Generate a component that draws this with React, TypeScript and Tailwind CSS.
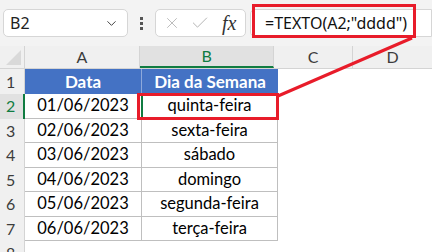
import React from 'react';
import { ChevronDown, X, Check } from 'lucide-react';

const rows: [string, string][] = [
  ['01/06/2023', 'quinta-feira'],
  ['02/06/2023', 'sexta-feira'],
  ['03/06/2023', 'sábado'],
  ['04/06/2023', 'domingo'],
  ['05/06/2023', 'segunda-feira'],
  ['06/06/2023', 'terça-feira'],
];

const cellFont = { fontFamily: 'Lato, "Liberation Sans", sans-serif' };

const App: React.FC = () => {
  return (
    <div className="relative w-[432px] h-[252px] overflow-hidden bg-white text-black" style={cellFont}>
      {/* name box + formula bar */}
      <div className="h-[46px] bg-[#f3f3f3] flex items-start pt-[9px] pl-[3px]">
        <div className="w-[125px] h-[28px] bg-white border border-[#d6d6d6] rounded-[5px] flex items-center justify-between pl-[6px] pr-[8px]">
          <span className="text-[16px] text-[#222]" style={{ fontFamily: '"Noto Sans", sans-serif' }}>B2</span>
          <ChevronDown size={15} strokeWidth={1.6} className="text-[#444]" />
        </div>
        <div className="w-[27px] h-[28px] flex flex-col items-center justify-center gap-[2px]">
          <span className="w-[3px] h-[3px] bg-[#555]" />
          <span className="w-[3px] h-[3px] bg-[#555]" />
          <span className="w-[3px] h-[3px] bg-[#555]" />
        </div>
        <div className="w-[91px] h-[28px] bg-white border border-[#d6d6d6] rounded-[5px] flex items-center pl-[7px]">
          <X size={18} strokeWidth={1.2} className="text-[#b5b5b5]" />
          <Check size={20} strokeWidth={1.2} className="text-[#b5b5b5] ml-[9px]" />
          <span className="ml-[12px] text-[20px] italic leading-none text-[#333]" style={{ fontFamily: '"Liberation Serif", serif' }}>fx</span>
        </div>
        <div className="ml-[4px] flex-1 h-[28px] bg-white border border-[#d6d6d6] rounded-l-[5px] flex items-center pl-[14px]">
          <span className="text-[16px] text-[#111]" style={{ fontFamily: '"Noto Sans", sans-serif' }}>=TEXTO(A2;"dddd")</span>
        </div>
      </div>

      {/* column headers */}
      <div className="flex h-[23px] bg-[#f0f0f0] border-b border-[#d4d4d4] text-[16px] text-[#3c3c3c]">
        <div className="w-[25px] relative border-r border-[#d4d4d4]">
          <div className="absolute right-[3px] bottom-[3px] w-0 h-0 border-l-[15px] border-l-transparent border-b-[15px] border-b-[#d9d9d9]" />
        </div>
        <div className="w-[117px] flex items-center justify-center border-r border-[#d4d4d4]">A</div>
        <div className="w-[136px] flex items-center justify-center bg-[#e1e1e1] border-b-2 border-[#107c41] text-[#107c41] border-r border-r-[#d4d4d4]">B</div>
        <div className="w-[80px] flex items-center justify-center border-r border-[#d4d4d4]">C</div>
        <div className="w-[80px] flex items-center justify-center">D</div>
      </div>

      {/* row 1: table header */}
      <div className="flex h-[25px]">
        <div className="w-[25px] bg-[#f0f0f0] border-r border-[#d4d4d4] text-[16px] text-[#3c3c3c] flex items-center pl-[6px]">1</div>
        <div className="w-[117px] bg-[#4472c4] border-r border-[#8ea9db] flex items-center justify-center text-white font-bold text-[17px]">Data</div>
        <div className="w-[136px] bg-[#4472c4] flex items-center justify-center text-white font-bold text-[17px]">Dia da Semana</div>
        <div className="flex-1" />
      </div>

      {/* data rows */}
      {rows.map(([date, day], i) => {
        const active = i === 0;
        return (
          <div key={date} className="flex h-[24.5px]">
            <div
              className={
                active
                  ? 'w-[25px] bg-[#e1e1e1] border-r-2 border-[#107c41] text-[16px] text-[#107c41] flex items-center pl-[6px]'
                  : 'w-[25px] bg-[#f0f0f0] border-r border-[#d4d4d4] text-[16px] text-[#3c3c3c] flex items-center pl-[6px]'
              }
            >
              {i + 2}
            </div>
            <div className="w-[117px] border-r border-b border-[#bfbfbf] flex items-center justify-center text-[16.5px]">{date}</div>
            <div className="relative w-[136px] border-r border-b border-[#bfbfbf] flex items-center justify-center text-[16.5px]">
              {day}
              {active && (
                <>
                  <div className="absolute -left-px -top-px -right-px -bottom-px border-2 border-[#107c41]" />
                  <div className="absolute -right-[3px] -bottom-[3px] w-[5px] h-[5px] bg-[#107c41] border border-white" />
                </>
              )}
            </div>
            <div className="flex-1" />
          </div>
        );
      })}

      {/* row 8 */}
      <div className="flex h-[24.5px]">
        <div className="w-[25px] bg-[#f0f0f0] border-r border-[#d4d4d4] text-[16px] text-[#3c3c3c] flex items-center pl-[6px]">8</div>
        <div className="flex-1" />
      </div>

      {/* red callouts */}
      <div className="absolute left-[252px] top-[4px] w-[164px] h-[34px] border-[3px] border-[#e81c2a]" />
      <div className="absolute left-[137px] top-[93px] w-[142px] h-[27px] border-[3px] border-[#e81c2a]" />
      <svg className="absolute left-0 top-0 pointer-events-none" width={432} height={252}>
        <line x1={412} y1={38} x2={278} y2={96} stroke="#e81c2a" strokeWidth={3} />
      </svg>
    </div>
  );
};

export default App;
